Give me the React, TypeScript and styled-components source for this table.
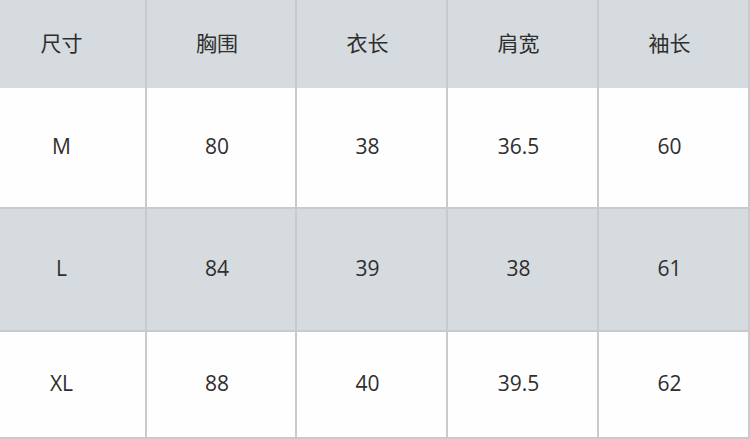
import styled, { createGlobalStyle } from "styled-components";

const GlobalStyle = createGlobalStyle`
  html, body {
    margin: 0;
    padding: 0;
    background: #ffffff;
  }
`;

const header = ["尺寸", "胸围", "衣长", "肩宽", "袖长"];

const rows: { cells: string[]; shaded: boolean; height: number }[] = [
  { cells: ["M", "80", "38", "36.5", "60"], shaded: false, height: 121 },
  { cells: ["L", "84", "39", "38", "61"], shaded: true, height: 123 },
  { cells: ["XL", "88", "40", "39.5", "62"], shaded: false, height: 107 },
];

export default function App() {
  return (
    <>
      <GlobalStyle />
      <Table>
        <Row $height={88} $shaded $noBottom>
          {header.map((h) => (
            <Cell key={h}>{h}</Cell>
          ))}
        </Row>
        {rows.map((r) => (
          <Row key={r.cells[0]} $height={r.height} $shaded={r.shaded}>
            {r.cells.map((c, j) => (
              <Cell key={j}>{c}</Cell>
            ))}
          </Row>
        ))}
      </Table>
    </>
  );
}

const Table = styled.div`
  width: 750px;
  height: 439px;
  display: flex;
  flex-direction: column;
  font-family: "Open Sans", "Noto Sans CJK SC", sans-serif;
  font-size: 21px;
  color: #2e2e2e;
`;

const Row = styled.div<{ $height: number; $shaded?: boolean; $noBottom?: boolean }>`
  flex: none;
  display: grid;
  grid-template-columns: 147px 150px 151px 151px 151px;
  height: ${({ $height }) => $height}px;
  box-sizing: border-box;
  background: ${({ $shaded }) => ($shaded ? "#d6dbdf" : "#fefefe")};
  border-bottom: ${({ $noBottom }) => ($noBottom ? "0" : "2px solid #c8cacc")};
`;

const Cell = styled.div`
  display: flex;
  align-items: center;
  justify-content: center;
  box-sizing: border-box;
  padding-right: 8px;
  padding-bottom: 4px;
  border-right: 2px solid #c8cacc;

  &:first-child {
    padding-right: 22px;
  }
`;
